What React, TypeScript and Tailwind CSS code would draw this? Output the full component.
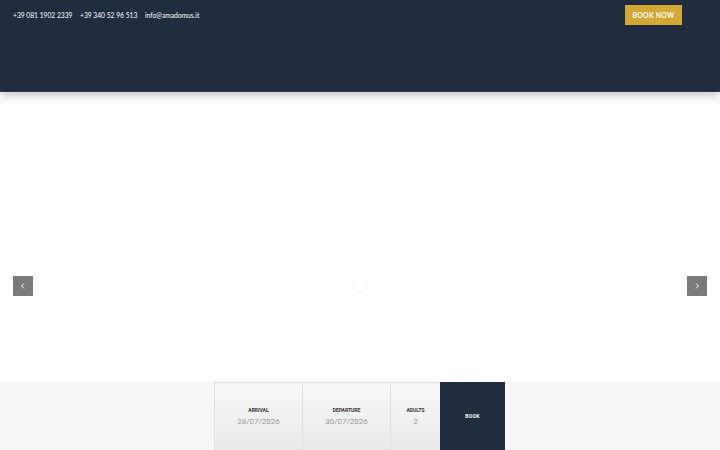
import React from "react";

export default function App() {
  return (
    <div className="w-[720px] h-[450px] overflow-hidden bg-white relative" style={{ fontFamily: "Lato, 'Open Sans', sans-serif" }}>
      <header className="h-[92px] bg-[#212d3f] flex items-start justify-between pl-[13px] pr-[38px] relative z-10 shadow-[0_3px_10px_rgba(0,0,0,0.25)] border-b border-[#2c3552]">
        <div className="flex text-[6.7px] text-white mt-[10px] leading-[10px]">
          <span className="w-[67px]">+39 081 1902 2339</span>
          <span className="w-[65px]">+39 340 52 96 513</span>
          <span>info@amadomus.it</span>
        </div>
        <button className="mt-[5px] w-[57px] h-[20px] bg-[#d4a834] text-white text-[6.8px] font-bold tracking-[0.3px] flex items-center justify-center">BOOK NOW</button>
      </header>
      <div className="h-[290px] relative flex items-start justify-between px-[13px] pt-[184px]">
        <div className="w-[20px] h-[20px] bg-[#7b7b7b] flex items-center justify-center">
          <svg width="8" height="8" viewBox="0 0 8 8"><path d="M5 1.5 L2.5 4 L5 6.5" stroke="white" strokeWidth="1" fill="none" /></svg>
        </div>
        <div className="w-[14px] h-[14px] rounded-full border border-[#f2f2f2] mt-[3px]" />
        <div className="w-[20px] h-[20px] bg-[#7b7b7b] flex items-center justify-center">
          <svg width="8" height="8" viewBox="0 0 8 8"><path d="M3 1.5 L5.5 4 L3 6.5" stroke="white" strokeWidth="1" fill="none" /></svg>
        </div>
      </div>
      <div className="h-[68px] bg-[#f6f6f6] flex justify-center" style={{ fontFamily: "Roboto, sans-serif" }}>
        <div className="flex ml-[-1px]">
          <div className="w-[88px] border-l border-t border-[#e0e0e0] bg-gradient-to-b from-[#f7f7f7] to-[#e9eaea] flex flex-col items-center pt-[24px]">
            <span className="text-[5px] font-bold text-[#333]">ARRIVAL</span>
            <span className="text-[8px] text-[#999] mt-[1px]">28/07/2026</span>
          </div>
          <div className="w-[88px] border-l border-t border-[#e0e0e0] bg-gradient-to-b from-[#f7f7f7] to-[#e9eaea] flex flex-col items-center pt-[24px]">
            <span className="text-[5px] font-bold text-[#333]">DEPARTURE</span>
            <span className="text-[8px] text-[#999] mt-[1px]">30/07/2026</span>
          </div>
          <div className="w-[50px] border-l border-t border-[#e0e0e0] bg-gradient-to-b from-[#f7f7f7] to-[#e9eaea] flex flex-col items-center pt-[24px]">
            <span className="text-[5px] font-bold text-[#333]">ADULTS</span>
            <span className="text-[8px] text-[#999] mt-[1px]">2</span>
          </div>
          <div className="w-[65px] bg-[#212d3f] flex items-center justify-center pt-[1px]">
            <span className="text-[5px] font-bold text-white tracking-[0.3px]">BOOK</span>
          </div>
        </div>
      </div>
    </div>
  );
}
